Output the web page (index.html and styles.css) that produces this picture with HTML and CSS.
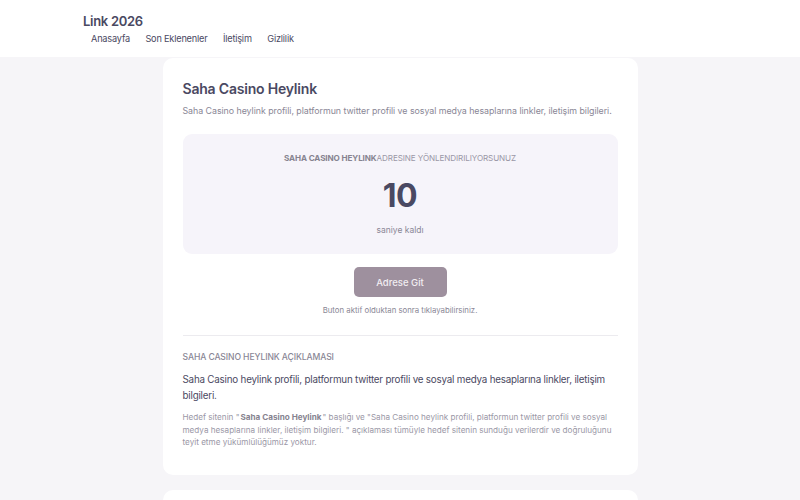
FILE: index.html
```html
<!DOCTYPE html>
<html lang="tr">
<head>
<meta charset="utf-8">
<title>Saha Casino Heylink</title>
<link rel="stylesheet" href="styles.css">
</head>
<body>
<header class="site-header">
  <div class="header-inner">
    <div class="brand">Link 2026</div>
    <nav class="nav">
      <a href="#">Anasayfa</a>
      <a href="#">Son Eklenenler</a>
      <a href="#">İletişim</a>
      <a href="#">Gizlilik</a>
    </nav>
  </div>
</header>
<main class="main">
  <section class="card">
    <h1 class="title">Saha Casino Heylink</h1>
    <p class="subtitle">Saha Casino heylink profili, platformun twitter profili ve sosyal medya hesaplarına linkler, iletişim bilgileri.</p>
    <div class="redirect-box">
      <div class="redirect-label"><strong>SAHA CASINO HEYLINK</strong>ADRESINE YÖNLENDIRILIYORSUNUZ</div>
      <div class="counter">10</div>
      <div class="counter-caption">saniye kaldı</div>
    </div>
    <div class="action">
      <button class="btn" disabled>Adrese Git</button>
      <div class="action-note">Buton aktif olduktan sonra tıklayabilirsiniz.</div>
    </div>
    <hr class="divider">
    <h2 class="section-title">SAHA CASINO HEYLINK AÇIKLAMASI</h2>
    <p class="desc">Saha Casino heylink profili, platformun twitter profili ve sosyal medya hesaplarına linkler, iletişim bilgileri.</p>
    <p class="disclaimer">Hedef sitenin "<strong>Saha Casino Heylink</strong>" başlığı ve "Saha Casino heylink profili, platformun twitter profili ve sosyal medya hesaplarına linkler, iletişim bilgileri. " açıklaması tümüyle hedef sitenin sunduğu verilerdir ve doğruluğunu teyit etme yükümlülüğümüz yoktur.</p>
  </section>
  <section class="card card-next"></section>
</main>
</body>
</html>
```

FILE: styles.css
```css
* { box-sizing: border-box; }
html, body { margin: 0; padding: 0; }
body {
  font-family: Inter, "Noto Sans", sans-serif;
  background: #f6f5f8;
  color: #4a4962;
}
.site-header {
  background: #ffffff;
  height: 57px;
}
.header-inner {
  width: 634px;
  margin: 0 auto;
  padding-top: 13px;
}
.brand {
  font-size: 13px;
  font-weight: 600;
  color: #4a4962;
  line-height: 17px;
  letter-spacing: -0.3px;
}
.nav {
  display: flex;
  margin-top: 3px;
  padding-left: 8px;
}
.nav a {
  font-size: 9.2px;
  color: #4a4962;
  text-decoration: none;
  line-height: 12px;
  margin-right: 15.5px;
  letter-spacing: -0.2px;
}
.main {
  padding-top: 1px;
  display: flex;
  flex-direction: column;
  align-items: center;
  gap: 15px;
}
.card {
  width: 475px;
  background: #ffffff;
  border-radius: 10px;
  padding: 22px 20px 26px 20px;
}
.card-next { height: 40px; }
.title {
  margin: 0;
  font-size: 14px;
  font-weight: 600;
  line-height: 18px;
  color: #4a4962;
  letter-spacing: -0.2px;
}
.subtitle {
  margin: 7px 0 0;
  font-size: 8.85px;
  line-height: 12px;
  color: #8a8796;
  letter-spacing: -0.05px;
}
.redirect-box {
  margin-top: 17px;
  background: #f6f4fa;
  border-radius: 9px;
  height: 120px;
  display: flex;
  flex-direction: column;
  align-items: center;
  padding-top: 19px;
}
.redirect-label {
  font-size: 8.1px;
  line-height: 10px;
  color: #9a97a6;
  letter-spacing: -0.1px;
}
.redirect-label strong { color: #86838f; font-weight: 700; }
.counter {
  margin-top: 15px;
  font-size: 32px;
  font-weight: 700;
  line-height: 36px;
  color: #4a4962;
  letter-spacing: -0.5px;
}
.counter-caption {
  margin-top: 10px;
  font-size: 8.5px;
  line-height: 12px;
  color: #8a8796;
}
.action {
  display: flex;
  flex-direction: column;
  align-items: center;
  margin-top: 13px;
}
.btn {
  width: 93px;
  height: 30px;
  border: none;
  border-radius: 5px;
  background: #9e909e;
  color: #f2eef2;
  font-family: inherit;
  font-size: 9.5px;
  font-weight: 500;
}
.action-note {
  margin-top: 8px;
  font-size: 7.8px;
  line-height: 10px;
  color: #8a8796;
}
.divider {
  border: none;
  border-top: 1px solid #ecebef;
  margin: 20px 0 0;
}
.section-title {
  margin: 15px 0 0;
  font-size: 8.6px;
  font-weight: 500;
  line-height: 12px;
  color: #8a8796;
  letter-spacing: -0.1px;
}
.desc {
  margin: 9px 0 0;
  font-size: 9.8px;
  line-height: 16px;
  color: #4a4962;
  letter-spacing: -0.2px;
}
.disclaimer {
  margin: 7px 0 0;
  font-size: 8.15px;
  line-height: 12.5px;
  color: #9a97a6;
}
.disclaimer strong { color: #86838f; margin: 0 1px; }
```
